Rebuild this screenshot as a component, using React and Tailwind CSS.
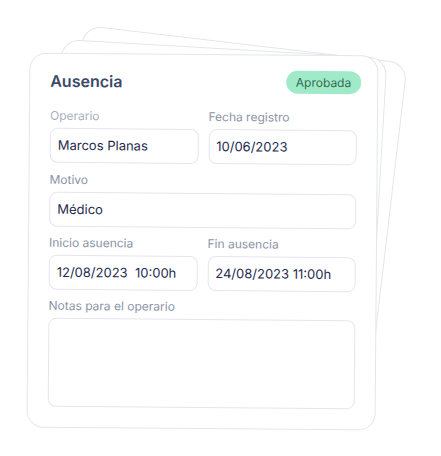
import React from "react";

function Field({ label, value, labelClass = "text-[#8a92a6]" }) {
  return (
    <div className="flex flex-col">
      <div className={`text-[12px] leading-4 mb-1 ${labelClass}`}>{label}</div>
      <div className="h-[35px] rounded-lg border border-[#e4e6ec] bg-white flex items-center pl-[7px] pr-2 text-[13px] text-[#1f2b4d] whitespace-pre">
        {value}
      </div>
    </div>
  );
}

export default function App() {
  return (
    <div className="relative w-[441px] h-[456px] bg-white overflow-hidden font-['Inter',sans-serif]">
      <div className="absolute left-[84px] top-[25px] w-[326px] h-[330px] rounded-[18px] border border-[#e4e6ec] bg-white origin-top-left rotate-[6.7deg]" />
      <div className="absolute left-[62px] top-[39px] w-[326px] h-[340px] rounded-[18px] border border-[#e4e6ec] bg-white origin-top-left rotate-[3.3deg]" />
      <div className="pt-[54px] pl-[28px]">
        <div className="relative w-[349px] rounded-[17px] border border-[#e4e6ec] bg-white px-5 pt-[15px] pb-5 rotate-[0.45deg]">
          <div className="flex items-center justify-between h-[23px]">
            <div className="text-[16px] font-semibold text-[#3b4868] leading-none">Ausencia</div>
            <div className="h-[23px] px-[10px] -mr-1 rounded-full bg-[#a0eac9] text-[#2f6a50] text-[12px] flex items-center">
              Aprobada
            </div>
          </div>
          <div className="grid grid-cols-2 gap-x-[10px] mt-[16px]">
            <Field label="Operario" value="Marcos Planas" labelClass="text-[#a9afbd]" />
            <Field label="Fecha registro" value="10/06/2023" />
          </div>
          <div className="mt-[9px]">
            <Field label="Motivo" value="Médico" />
          </div>
          <div className="grid grid-cols-2 gap-x-[10px] mt-[8px]">
            <Field label="Inicio asuencia" value="12/08/2023  10:00h" />
            <Field label="Fin ausencia" value="24/08/2023 11:00h" />
          </div>
          <div className="mt-[8px] flex flex-col">
            <div className="text-[12px] leading-4 mb-1 text-[#8a92a6]">Notas para el operario</div>
            <div className="h-[89px] rounded-lg border border-[#e4e6ec] bg-white" />
          </div>
        </div>
      </div>
    </div>
  );
}
